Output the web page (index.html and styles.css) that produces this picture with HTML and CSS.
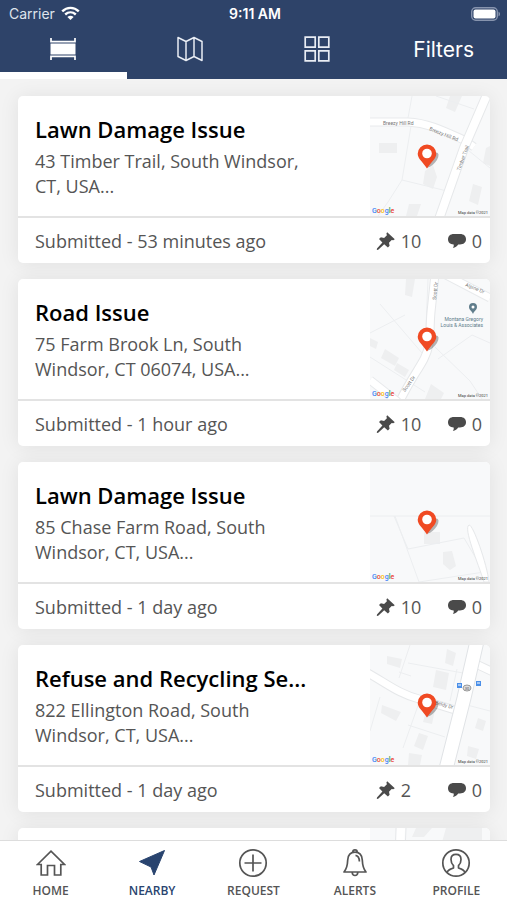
FILE: index.html
```html
<!DOCTYPE html>
<html lang="en">
<head>
<meta charset="utf-8">
<meta name="viewport" content="width=device-width, initial-scale=1">
<title>Nearby issues</title>
<link rel="stylesheet" href="styles.css">
</head>
<body>
<svg class="defs" aria-hidden="true">
  <symbol id="pushpin" viewBox="0 0 20 20">
    <path d="M11.2 1.2 18.8 8.3 17.2 9.3 15.7 8.9 13 11.7 13.6 14.7 11.9 16.6 8.2 13.2 2.2 18.8.8 19 1 17.6 6.4 11.5 3 8 4.9 6.3 8.1 7 10.9 4.3 10.4 2.6Z" fill="#4a4a4a"/>
  </symbol>
  <symbol id="bubble" viewBox="0 0 20 16">
    <path d="M7 1h6c4 0 6 2.200 6 5.300 0 3.200-2.400 5.200-6 5.200h-1.800C10 13.500 8.400 14.600 5.800 15c.8-1 1.100-2 .9-3.500C3 11.300 1 9.300 1 6.300 1 3.200 3 1 7 1Z" fill="#4a4a4a"/>
  </symbol>
  <symbol id="marker" viewBox="0 0 28 28">
    <ellipse cx="15" cy="16" rx="9" ry="4" transform="rotate(-50 15 16)" fill="#000" opacity=".28"/>
    <path d="M10 .5A9.300 9.300 0 0 0 .7 9.800C.7 15 6 18 10 24.500 14 18 19.300 15 19.300 9.800A9.300 9.300 0 0 0 10 .5Z" fill="#f04a23"/>
    <circle cx="10" cy="9.500" r="4.800" fill="#fff"/>
  </symbol>
</svg>

<header class="top">
  <div class="status">
    <span class="carrier">Carrier
      <svg width="19" height="15" viewBox="0 0 19 15" fill="none" stroke="#fff" stroke-width="2.400" aria-hidden="true"><path d="M1.200 5.400C6 .7 13 .7 17.800 5.400M4.200 8.500c3.200-2.900 7.400-2.900 10.600 0"/><path d="M6.400 10.900c2-1.700 4.200-1.700 6.200 0L9.500 14Z" fill="#fff" stroke="none"/></svg>
    </span>
    <span class="clock">9:11 AM</span>
    <svg class="battery" width="30" height="14" viewBox="0 0 30 14" aria-hidden="true"><rect x=".7" y=".7" width="25.600" height="12.600" rx="4" fill="none" stroke="#8794ae" stroke-width="1.400"/><rect x="2.500" y="2.500" width="22" height="9" rx="2" fill="#fff"/><path d="M27.500 4.700c2 .7 2 3.900 0 4.600Z" fill="#8794ae"/></svg>
  </div>
  <nav class="views" aria-label="Views">
    <button class="view active" aria-label="List"><svg width="26" height="24" viewBox="0 0 26 24" fill="none" stroke="#fff" stroke-width="1.700"><path d="M1 1v3.600h24V1M1 23v-3.600h24V23"/><path d="M.5 6.500h25v11H.5z" fill="#fff" stroke="none"/></svg></button>
    <button class="view" aria-label="Map"><svg width="26" height="26" viewBox="0 0 26 26" fill="none" stroke="#e9edf4" stroke-width="1.500" stroke-linejoin="round"><path d="M1 1.500 9 5.500 17 1.500 25 5.500V24.500L17 20.500 9 24.500 1 20.500ZM9 5.500v19M17 1.500v19"/></svg></button>
    <button class="view" aria-label="Grid"><svg width="26" height="26" viewBox="0 0 26 26" fill="none" stroke="#e9edf4" stroke-width="1.700"><path d="M1.200 1.200h10v10h-10zM14.800 1.200h10v10h-10zM1.200 14.800h10v10h-10zM14.800 14.800h10v10h-10z"/></svg></button>
    <button class="view">Filters</button>
  </nav>
</header>

<main class="feed">
  <article class="card">
    <div class="card-main">
      <div class="card-text"><h2>Lawn Damage Issue</h2><p>43 Timber Trail, South Windsor, CT, USA...</p></div>
      <svg class="map" viewBox="0 0 120 120" role="img" aria-label="Map">
        <rect width="120" height="120" fill="#f8f9fa"/>
        <g fill="#eeeff0"><path d="M9 47h18v10H9zM80 0h12l-7 16-9-4zM55 75l8-6 4 12-4 12-10-5zM103 88l9 3-4 18-9-4zM39 108h12l-4 12H36zM116 52l4-2v20l-7-3z"/></g>
        <path d="M42 0 38 22M41 30 32 84 18 106 8 120M32 84l45 11M66 0l38 13M93 50l27 22" fill="none" stroke="#eceef0"/>
        <path d="M0 26h38c20 1 34 8 56 18l10 7" fill="none" stroke="#e8eaec" stroke-width="9"/><path d="M0 26h38c20 1 34 8 56 18l10 7" fill="none" stroke="#fff" stroke-width="7"/>
        <path d="M119-6 94 52 68 126" fill="none" stroke="#e6e8ea" stroke-width="10"/><path d="M119-6 94 52 68 126" fill="none" stroke="#fff" stroke-width="8"/>
        <g class="road"><text x="13" y="29">Breezy Hill Rd</text><text transform="translate(59 34) rotate(22)">Breezy Hill Rd</text><text transform="translate(90 75) rotate(-70)">Timber Trail</text></g>
        <use href="#marker" x="47" y="48" width="28" height="28"/>
        <text class="logo" x="2" y="117"><tspan class="blue">G</tspan><tspan class="red">o</tspan><tspan class="yellow">o</tspan><tspan class="blue">g</tspan><tspan class="green">l</tspan><tspan class="red">e</tspan></text><text class="credit" x="118" y="118">Map data ©2021</text>
      </svg>
    </div>
    <footer><span class="state">Submitted - 53 minutes ago</span><span class="count pins"><svg aria-label="Follows"><use href="#pushpin"/></svg>10</span><span class="count"><svg aria-label="Comments"><use href="#bubble"/></svg>0</span></footer>
  </article>

  <article class="card">
    <div class="card-main">
      <div class="card-text"><h2>Road Issue</h2><p>75 Farm Brook Ln, South Windsor, CT 06074, USA...</p></div>
      <svg class="map" viewBox="0 0 120 120" role="img" aria-label="Map">
        <rect width="120" height="120" fill="#f8f9fa"/>
        <g fill="#eeeff0"><path d="M36 0h9l-3 18-7-2zM15 70l14 9-4 8-14-8zM27 84l12 7-4 7-11-7zM0 59l8 4-2 7-6-3zM61 105l13 9-3 6H55z"/></g>
        <path d="M0 54 35 36M10 25l48 56M0 78l55 35M65 68l35 34 12 18M68 80l34-24 18 8M58 0l-2 48" fill="none" stroke="#eceef0"/>
        <path d="M65-5 61 33C59 55 62 64 54 80 47 93 39 103 29 124" fill="none" stroke="#e6e8ea" stroke-width="9"/><path d="M65-5 61 33C59 55 62 64 54 80 47 93 39 103 29 124" fill="none" stroke="#fff" stroke-width="7"/>
        <path d="M76-4 120 19M0 101l28 22" fill="none" stroke="#e8eaec" stroke-width="9"/><path d="M76-4 120 19M0 101l28 22" fill="none" stroke="#fff" stroke-width="7"/>
        <g class="road"><text transform="translate(66 21) rotate(-84)">Scott Dr</text><text transform="translate(95 7) rotate(22)">Alpine Dr</text><text transform="translate(35 113) rotate(-54)">Scott Dr</text></g>
        <g class="place"><text x="113" y="42">Montana Gregory</text><text x="113" y="48">Louis &amp; Associates</text></g>
        <path d="M103 24a4 4 0 0 0-4 4c0 3 3 4 4 7 1-3 4-4 4-7a4 4 0 0 0-4-4Z" fill="#607d8b"/><circle cx="103" cy="28" r="1.500" fill="#fff"/>
        <use href="#marker" x="47" y="48" width="28" height="28"/>
        <text class="logo" x="2" y="117"><tspan class="blue">G</tspan><tspan class="red">o</tspan><tspan class="yellow">o</tspan><tspan class="blue">g</tspan><tspan class="green">l</tspan><tspan class="red">e</tspan></text><text class="credit" x="118" y="118">Map data ©2021</text>
      </svg>
    </div>
    <footer><span class="state">Submitted - 1 hour ago</span><span class="count pins"><svg aria-label="Follows"><use href="#pushpin"/></svg>10</span><span class="count"><svg aria-label="Comments"><use href="#bubble"/></svg>0</span></footer>
  </article>

  <article class="card">
    <div class="card-main">
      <div class="card-text"><h2>Lawn Damage Issue</h2><p>85 Chase Farm Road, South Windsor, CT, USA...</p></div>
      <svg class="map" viewBox="0 0 120 120" role="img" aria-label="Map">
        <rect width="120" height="120" fill="#f8f9fa"/>
        <path d="M54 70h16v12H54zM73 90l9-1 4 15-6 4-7-6z" fill="#eeeff0"/>
        <path d="M0 54h120M25 54l24 66M38 87l56-11 20 34-65 10M24 54l14 33" fill="none" stroke="#eceef0"/>
        <path d="M99 63c4-1 18 39 20 57h-5C108 101 93 66 99 63Z" fill="#fff" stroke="#e6e8ea"/>
        <use href="#marker" x="47" y="48" width="28" height="28"/>
        <text class="logo" x="2" y="117"><tspan class="blue">G</tspan><tspan class="red">o</tspan><tspan class="yellow">o</tspan><tspan class="blue">g</tspan><tspan class="green">l</tspan><tspan class="red">e</tspan></text><text class="credit" x="118" y="118">Map data ©2021</text>
      </svg>
    </div>
    <footer><span class="state">Submitted - 1 day ago</span><span class="count pins"><svg aria-label="Follows"><use href="#pushpin"/></svg>10</span><span class="count"><svg aria-label="Comments"><use href="#bubble"/></svg>0</span></footer>
  </article>

  <article class="card">
    <div class="card-main">
      <div class="card-text"><h2>Refuse and Recycling Se...</h2><p>822 Ellington Road, South Windsor, CT, USA...</p></div>
      <svg class="map" viewBox="0 0 120 120" role="img" aria-label="Map">
        <rect width="120" height="120" fill="#f8f9fa"/>
        <g fill="#eeeff0"><path d="M17 11l15 3-2 9-13-4zM77 4l9 4-3 13-8-3zM66 25l13 3-3 17-13-3zM12 60l19 7-5 9-15-8zM55 70l10-5-3 14-9-2zM49 88l9 3-5 14-9-4zM39 108l13 2-2 10H38zM108 73l8 3-3 10-8-3zM98 101l11 3-3 10-9-3z"/></g>
        <path d="M40 0 29 33M29 27l12 4M38 18l55 10M87 24 80 56M50 55 33 103M38 80l37 12M10 52 0 86M96 60l-8 40M97 60l23 6" fill="none" stroke="#eceef0"/>
        <path d="M-4 27C16 38 29 49 49 54l36 11M106 19l17 8" fill="none" stroke="#e6e8ea" stroke-width="9"/><path d="M-4 27C16 38 29 49 49 54l36 11M106 19l17 8" fill="none" stroke="#fff" stroke-width="7"/>
        <path d="M107-4 94 53 76 124" fill="none" stroke="#e0e3e6" stroke-width="15"/><path d="M107-4 94 53 76 124" fill="none" stroke="#fff" stroke-width="13"/>
        <path d="M87 38h5v5h-5zM106 36h5v5h-5z" fill="#4b8fe8"/><path d="M88 40h3M107 38h3" stroke="#fff"/>
        <ellipse cx="97" cy="43" rx="4" ry="3" fill="#ddd" stroke="#999"/><text class="route" x="97" y="45">30</text>
        <g class="road"><text transform="translate(65 59) rotate(16)">Beldy Dr</text></g>
        <use href="#marker" x="47" y="48" width="28" height="28"/>
        <text class="logo" x="2" y="117"><tspan class="blue">G</tspan><tspan class="red">o</tspan><tspan class="yellow">o</tspan><tspan class="blue">g</tspan><tspan class="green">l</tspan><tspan class="red">e</tspan></text><text class="credit" x="118" y="118">Map data ©2021</text>
      </svg>
    </div>
    <footer><span class="state">Submitted - 1 day ago</span><span class="count pins"><svg aria-label="Follows"><use href="#pushpin"/></svg>2</span><span class="count"><svg aria-label="Comments"><use href="#bubble"/></svg>0</span></footer>
  </article>

  <article class="card">
    <div class="card-main">
      <div class="card-text"></div>
      <svg class="map" viewBox="0 0 120 120" role="img" aria-label="Map"><rect width="120" height="120" fill="#f8f9fa"/><path d="M26 0 22 120M36 0l-5 120" stroke="#e6e8ea" fill="none"/><path d="M31 0 26 120" stroke="#fff" stroke-width="8"/><path d="M46 0h16l-8 9H42zM76 0h36v14H72z" fill="#eeeff0"/></svg>
    </div>
  </article>
</main>

<nav class="tabs" aria-label="Main">
  <a href="#home"><svg width="30" height="30" viewBox="0 0 30 30" fill="none" stroke="#555" stroke-width="1.700"><path d="M1.500 16.500 15 3.200 28.500 16.500H24.800V27H18.500V17.500H11.500V27H5.200V16.500Z"/></svg>HOME</a>
  <a href="#nearby" class="current" aria-current="page"><svg width="30" height="30" viewBox="0 0 30 30"><path d="M27.500 2.500 17 27 14 19 2.500 13.500Z" fill="#29446f" stroke="#29446f" stroke-linejoin="round"/></svg>NEARBY</a>
  <a href="#request"><svg width="30" height="30" viewBox="0 0 30 30" fill="none" stroke="#555" stroke-width="1.700"><circle cx="15" cy="15" r="13.200"/><path d="M15 6.500v17M6.500 15h17"/></svg>REQUEST</a>
  <a href="#alerts"><svg width="30" height="30" viewBox="0 0 30 30" fill="none" stroke="#555" stroke-width="1.700" stroke-linejoin="round"><path d="M15 4.200c-5 0-7 3.300-7.300 7.800C7.500 17.500 7 20.500 4 24h22c-3-3.500-3.500-6.500-3.700-12C22 7.500 20 4.200 15 4.200ZM12.800 4.200c0-3 4.400-3 4.400 0M12.200 24.500c.3 4 5.300 4 5.600 0M15.500 7.300c2.700.3 3.800 2.200 3.900 6.200"/></svg>ALERTS</a>
  <a href="#profile"><svg width="30" height="30" viewBox="0 0 30 30" fill="none" stroke="#555" stroke-width="1.700" stroke-linejoin="round"><circle cx="15" cy="15" r="13.200"/><path d="M6 24.800c.6-2.800 2.500-3.500 6.500-4.800v-2.300c-1.800-1.800-2.500-4-2.500-6.300 0-3.400 2-5 5-5s5 1.600 5 5c0 2.300-.7 4.500-2.500 6.300V20c4 1.300 5.900 2 6.500 4.800"/></svg>PROFILE</a>
</nav>
</body>
</html>
```

FILE: styles.css
```css
* { box-sizing: border-box; }

body {
  margin: 0;
  height: 100vh;
  display: flex;
  flex-direction: column;
  background: #f3f3f3;
  color: #555;
  font-family: "Open Sans", sans-serif;
}

.defs { position: absolute; width: 0; height: 0; }

/* Header */
.top { flex: none; background: #2e4369; color: #fff; font-family: Inter, sans-serif; }

.status {
  display: grid;
  grid-template-columns: 1fr auto 1fr;
  align-items: center;
  height: 27px;
  padding: 0 6px 0 9px;
  font-size: 14px;
}
.carrier { display: flex; align-items: center; gap: 6px; color: #dfe4ec; }
.clock { font-weight: 600; }
.battery { justify-self: end; }

.views { display: grid; grid-template-columns: repeat(4, 1fr); height: 52px; }
.view {
  display: flex;
  align-items: center;
  justify-content: center;
  padding: 0 0 8px;
  border: 0;
  border-bottom: 0 solid #fff;
  background: none;
  color: #fff;
  font: 400 21px Inter, sans-serif;
}
.view.active { padding-bottom: 1px; border-bottom-width: 7px; }

/* Issue list */
.feed {
  flex: 1;
  min-height: 0;
  overflow-y: auto;
  scrollbar-width: none;
  display: flex;
  flex-direction: column;
  gap: 16px;
  padding: 17px 17px 0 18px;
}
.card {
  flex: none;
  border-radius: 5px;
  background: #fff;
  box-shadow: 0 1px 20px rgba(0, 0, 0, .08);
}
.card-main { display: flex; border-bottom: 2px solid #e3e3e3; }
.card-text { flex: 1; min-width: 0; padding: 18px 60px 0 17px; }
.card h2 {
  margin: 0 0 4px;
  color: #000;
  font-size: 22px;
  font-weight: 600;
  line-height: 31px;
  white-space: nowrap;
}
.card p { margin: 0; font-size: 18px; line-height: 25px; }
.map { flex: none; width: 120px; height: 120px; border-top-right-radius: 5px; }
.card footer { display: flex; align-items: center; height: 45px; padding: 0 8px 0 17px; font-size: 18px; }
.state { flex: 1; }
.count { display: flex; align-items: center; gap: 5px; }
.count svg { width: 20px; height: 20px; }
.pins { width: 71px; }

/* Map labels */
.road { font: 5px Roboto, sans-serif; fill: #777; }
.place { font: 5px Roboto, sans-serif; fill: #607d8b; text-anchor: end; }
.route { font: 4px Roboto, sans-serif; fill: #555; text-anchor: middle; }
.credit { font: 4px Roboto, sans-serif; fill: #333; text-anchor: end; }
.logo { font: 500 7px Roboto, sans-serif; }
.blue { fill: #4285f4; }
.red { fill: #ea4335; }
.yellow { fill: #fbbc05; }
.green { fill: #34a853; }

/* Bottom navigation */
.tabs {
  flex: none;
  display: grid;
  grid-template-columns: repeat(5, 1fr);
  height: 60px;
  border-top: 1px solid #ddd;
  background: #fff;
}
.tabs a {
  display: flex;
  flex-direction: column;
  align-items: center;
  gap: 5px;
  padding-top: 7px;
  color: #555;
  font-size: 12px;
  font-weight: 600;
  line-height: 16px;
  text-decoration: none;
}
.tabs .current { color: #29446f; }
```
